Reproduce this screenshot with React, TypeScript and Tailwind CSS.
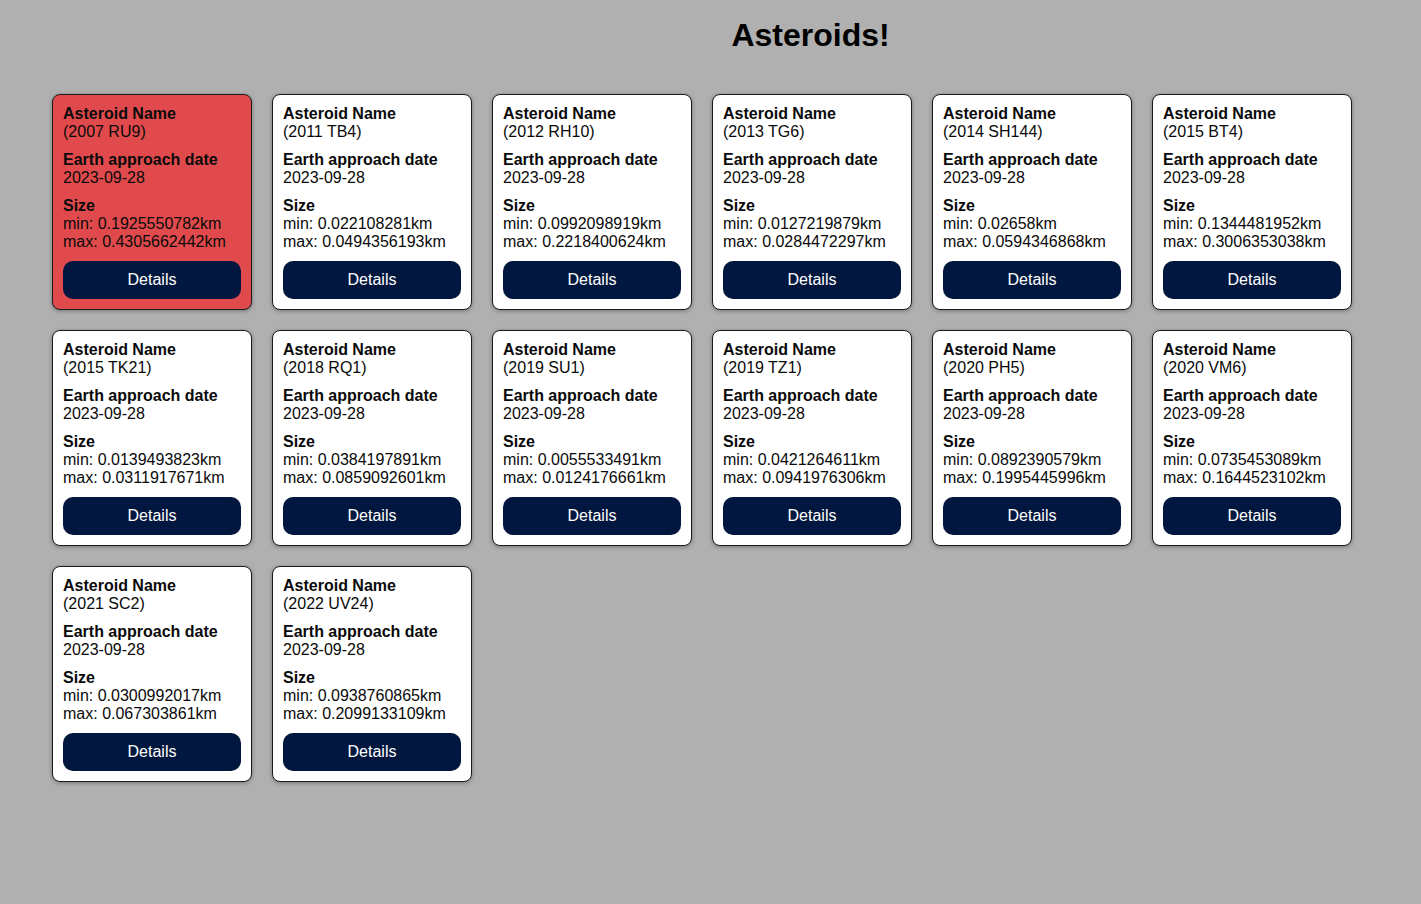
const asteroids = [
  { name: "(2007 RU9)", min: "0.1925550782", max: "0.4305662442", hazard: true },
  { name: "(2011 TB4)", min: "0.022108281", max: "0.0494356193" },
  { name: "(2012 RH10)", min: "0.0992098919", max: "0.2218400624" },
  { name: "(2013 TG6)", min: "0.0127219879", max: "0.0284472297" },
  { name: "(2014 SH144)", min: "0.02658", max: "0.0594346868" },
  { name: "(2015 BT4)", min: "0.1344481952", max: "0.3006353038" },
  { name: "(2015 TK21)", min: "0.0139493823", max: "0.0311917671" },
  { name: "(2018 RQ1)", min: "0.0384197891", max: "0.0859092601" },
  { name: "(2019 SU1)", min: "0.0055533491", max: "0.0124176661" },
  { name: "(2019 TZ1)", min: "0.0421264611", max: "0.0941976306" },
  { name: "(2020 PH5)", min: "0.0892390579", max: "0.1995445996" },
  { name: "(2020 VM6)", min: "0.0735453089", max: "0.1644523102" },
  { name: "(2021 SC2)", min: "0.0300992017", max: "0.067303861" },
  { name: "(2022 UV24)", min: "0.0938760865", max: "0.2099133109" },
];

const AsteroidCard = ({ a }: { a: (typeof asteroids)[number] }) => {
  return (
    <div
      className={`w-[200px] rounded-[8px] border border-[#1a1a1a] px-[10px] pt-[10px] pb-[10px] shadow-[0_1px_4px_rgba(0,0,0,0.35)] ${
        a.hazard ? "bg-[#e04a4c]" : "bg-white"
      }`}
    >
      <div className="flex flex-col gap-[10px] text-[16px] leading-[18px] text-[#0a0a0a]">
        <div>
          <div className="font-bold">Asteroid Name</div>
          <div>{a.name}</div>
        </div>
        <div>
          <div className="font-bold">Earth approach date</div>
          <div>2023-09-28</div>
        </div>
        <div>
          <div className="font-bold">Size</div>
          <div>min: {a.min}km</div>
          <div>max: {a.max}km</div>
        </div>
      </div>
      <button className="mt-[10px] h-[38px] w-full rounded-[10px] bg-[#02173f] text-[16px] text-white">
        Details
      </button>
    </div>
  );
};

export default function App() {
  return (
    <div className="min-h-[904px] bg-[#b0b0b0] font-['Liberation_Sans',Arial,sans-serif]">
      <h1 className="pl-[200px] pt-[14px] text-center text-[32px] font-bold leading-[42px] text-black">
        Asteroids!
      </h1>
      <div className="flex flex-wrap gap-x-[20px] gap-y-[20px] pl-[52px] pt-[38px] w-[1380px]">
        {asteroids.map((a) => (
          <AsteroidCard key={a.name} a={a} />
        ))}
      </div>
    </div>
  );
}
